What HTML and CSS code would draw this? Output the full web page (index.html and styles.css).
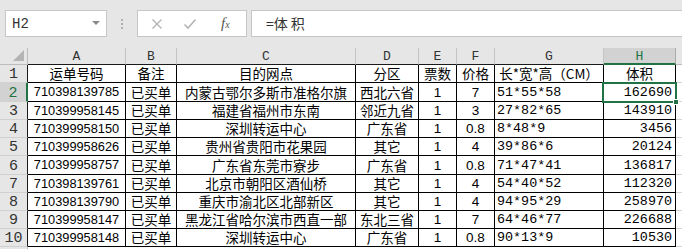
FILE: index.html
```html
<!DOCTYPE html>
<html lang="zh">
<head>
<meta charset="utf-8">
<link rel="stylesheet" href="styles.css">
</head>
<body>
<div class="bar">
  <div class="namebox"><span class="ref">H2</span><span class="dd"></span></div>
  <div class="dots"><i></i><i></i><i></i></div>
  <div class="fbtns">
    <svg class="ic" width="12" height="12" viewBox="0 0 12 12"><path d="M1.5 1.5L10.5 10.5M10.5 1.5L1.5 10.5" stroke="#b4b4b4" stroke-width="1.4" fill="none"/></svg>
    <svg class="ic" width="14" height="12" viewBox="0 0 14 12"><path d="M1.5 6.5L5 10L12.5 1.5" stroke="#b4b4b4" stroke-width="1.6" fill="none"/></svg>
    <span class="fx">f<span class="fxx">x</span></span>
  </div>
  <div class="finput">=体<span class="gap">积</span></div>
</div>
<div class="sheet">
  <div class="corner"><span class="tri"></span></div>
  <div class="ch">A</div><div class="ch">B</div><div class="ch">C</div><div class="ch">D</div><div class="ch">E</div><div class="ch">F</div><div class="ch">G</div><div class="ch sel">H</div><div class="ch x"></div>

  <div class="rh">1</div><div class="c cn">运单号码</div><div class="c cn">备注</div><div class="c cn">目的网点</div><div class="c cn">分区</div><div class="c cn">票数</div><div class="c cn">价格</div><div class="c cn">长*宽*高（CM）</div><div class="c cn">体积</div><div class="xc"></div>

  <div class="rh sel">2</div><div class="c num">710398139785</div><div class="c cn">已买单</div><div class="c cn">内蒙古鄂尔多斯市准格尔旗</div><div class="c cn">西北六省</div><div class="c ar">1</div><div class="c ar">7</div><div class="c dim">51*55*58</div><div class="c vol">162690</div><div class="xc"></div>

  <div class="rh">3</div><div class="c num">710399958145</div><div class="c cn">已买单</div><div class="c cn">福建省福州市东南</div><div class="c cn">邻近九省</div><div class="c ar">1</div><div class="c ar">3</div><div class="c dim">27*82*65</div><div class="c vol">143910</div><div class="xc"></div>

  <div class="rh">4</div><div class="c num">710399958150</div><div class="c cn">已买单</div><div class="c cn">深圳转运中心</div><div class="c cn">广东省</div><div class="c ar">1</div><div class="c ar">0.8</div><div class="c dim">8*48*9</div><div class="c vol">3456</div><div class="xc"></div>

  <div class="rh">5</div><div class="c num">710399958626</div><div class="c cn">已买单</div><div class="c cn">贵州省贵阳市花果园</div><div class="c cn">其它</div><div class="c ar">1</div><div class="c ar">4</div><div class="c dim">39*86*6</div><div class="c vol">20124</div><div class="xc"></div>

  <div class="rh">6</div><div class="c num">710399958757</div><div class="c cn">已买单</div><div class="c cn">广东省东莞市寮步</div><div class="c cn">广东省</div><div class="c ar">1</div><div class="c ar">0.8</div><div class="c dim">71*47*41</div><div class="c vol">136817</div><div class="xc"></div>

  <div class="rh">7</div><div class="c num">710398139761</div><div class="c cn">已买单</div><div class="c cn">北京市朝阳区酒仙桥</div><div class="c cn">其它</div><div class="c ar">1</div><div class="c ar">4</div><div class="c dim">54*40*52</div><div class="c vol">112320</div><div class="xc"></div>

  <div class="rh">8</div><div class="c num">710398139790</div><div class="c cn">已买单</div><div class="c cn">重庆市渝北区北部新区</div><div class="c cn">其它</div><div class="c ar">1</div><div class="c ar">4</div><div class="c dim">94*95*29</div><div class="c vol">258970</div><div class="xc"></div>

  <div class="rh">9</div><div class="c num">710399958147</div><div class="c cn">已买单</div><div class="c cn">黑龙江省哈尔滨市西直一部</div><div class="c cn">东北三省</div><div class="c ar">1</div><div class="c ar">7</div><div class="c dim">64*46*77</div><div class="c vol">226688</div><div class="xc"></div>

  <div class="rh">10</div><div class="c num">710399958148</div><div class="c cn">已买单</div><div class="c cn">深圳转运中心</div><div class="c cn">广东省</div><div class="c ar">1</div><div class="c ar">0.8</div><div class="c dim">90*13*9</div><div class="c vol">10530</div><div class="xc"></div>

  <div class="rh last"></div><div class="e"></div><div class="e"></div><div class="e"></div><div class="e"></div><div class="e"></div><div class="e"></div><div class="e"></div><div class="e"></div><div class="e"></div>

  <div class="selbox"></div>
  <div class="handle"></div>
</div>
</body>
</html>
```
FILE: styles.css
```css
* { box-sizing: border-box; }
html, body { margin: 0; padding: 0; }
body {
  width: 682px;
  height: 249px;
  overflow: hidden;
  background: #fff;
  font-family: "Noto Sans CJK SC", "Liberation Sans", sans-serif;
}
.bar {
  height: 48px;
  background: #e6e6e6;
  display: flex;
  align-items: flex-start;
  padding-top: 10px;
  padding-left: 5px;
}
.namebox {
  width: 102px;
  height: 27px;
  background: #fff;
  border: 1px solid #c6c6c6;
  display: flex;
  align-items: center;
  justify-content: space-between;
  padding: 0 6px 0 6px;
}
.ref {
  font-family: "Liberation Mono", monospace;
  font-size: 14px;
  color: #333;
  padding-top: 1px;
}
.dd {
  width: 0; height: 0;
  border-left: 4px solid transparent;
  border-right: 4px solid transparent;
  border-top: 4px solid #8a8a8a;
  margin-top: -2px;
}
.dots {
  width: 30px;
  height: 27px;
  display: flex;
  flex-direction: column;
  align-items: center;
  justify-content: center;
  gap: 2px;
}
.dots i {
  display: block;
  width: 2px; height: 2px;
  background: #b0b0b0;
}
.fbtns {
  width: 110px;
  height: 27px;
  background: #fff;
  border: 1px solid #c6c6c6;
  display: flex;
  align-items: center;
  padding-left: 13px;
}
.fbtns .ic:nth-child(1) { margin-right: 20px; }
.fbtns .ic:nth-child(2) { margin-right: 24px; }
.fx {
  font-family: "Liberation Serif", serif;
  font-style: italic;
  font-size: 15px;
  color: #555;
  line-height: 1;
}
.fxx { font-size: 10px; }
.finput {
  flex: 1;
  margin-left: 4px;
  height: 27px;
  background: #fff;
  border: 1px solid #c6c6c6;
  border-right: none;
  padding-left: 14px;
  font-size: 14px;
  color: #333;
  line-height: 25px;
}
.gap { margin-left: 3px; }
.sheet {
  position: relative;
  display: grid;
  grid-template-columns: 28px 98px 51px 179px 63px 38px 38px 109px 72px 1fr;
  grid-template-rows: 17px 18px 19px 18px 18px 18px 19px 18px 18px 18px 18px 1fr;
  height: 201px;
}
.corner {
  background: #e6e6e6;
  border-right: 1px solid #bcbcbc;
  border-bottom: 1px solid #bcbcbc;
  position: relative;
}
.tri {
  position: absolute;
  right: 3px; bottom: 3px;
  width: 0; height: 0;
  border-left: 11px solid transparent;
  border-bottom: 11px solid #b4b4b4;
}
.ch {
  background: #e6e6e6;
  border-right: 1px solid #c4c4c4;
  border-bottom: 1px solid #1a1a1a;
  font-family: "Liberation Mono", monospace;
  font-size: 13px;
  color: #333;
  text-align: center;
  line-height: 17px;
}
.ch.sel {
  background: #d2d2d2;
  color: #217346;
  border-bottom: 2px solid #217346;
  border-right-color: #ababab;
}
.ch.x {
  border-right: none;
  border-bottom-color: #bcbcbc;
}
.rh {
  background: #e6e6e6;
  border-right: 1px solid #1a1a1a;
  border-bottom: 1px solid #d0d0d0;
  font-family: "Liberation Mono", monospace;
  font-size: 15px;
  line-height: 1;
  color: #333;
  display: flex;
  align-items: center;
  justify-content: center;
  padding-top: 2px;
}
.rh.sel {
  background: #d2d2d2;
  color: #217346;
  border-right: 2px solid #217346;
}
.rh.last { border-right-color: #bcbcbc; border-bottom: none; }
.c {
  border-right: 1px solid #000;
  border-bottom: 1px solid #000;
  white-space: nowrap;
  display: flex;
  align-items: center;
  font-size: 13.5px;
  line-height: 1;
  color: #000;
  padding-top: 1px;
}
.cn {
  justify-content: center;
  font-family: "Noto Sans CJK SC", sans-serif;
}
.num {
  justify-content: center;
  font-family: "Liberation Sans", sans-serif;
  font-size: 12.8px;
}
.ar {
  justify-content: center;
  font-family: "Liberation Sans", sans-serif;
  font-size: 13.5px;
}
.dim {
  font-family: "Liberation Mono", monospace;
  font-size: 13.4px;
  padding-left: 2px;
}
.vol {
  justify-content: flex-end;
  font-family: "Liberation Mono", monospace;
  font-size: 13.4px;
  padding-right: 3px;
}
.xc {
  border-bottom: 1px solid #d4d4d4;
}
.selbox {
  position: absolute;
  left: 602px;
  top: 34px;
  width: 75px;
  height: 21px;
  border: 2px solid #217346;
  pointer-events: none;
}
.handle {
  position: absolute;
  left: 673px;
  top: 51px;
  width: 6px;
  height: 6px;
  background: #217346;
  border: 1px solid #fff;
}
```
